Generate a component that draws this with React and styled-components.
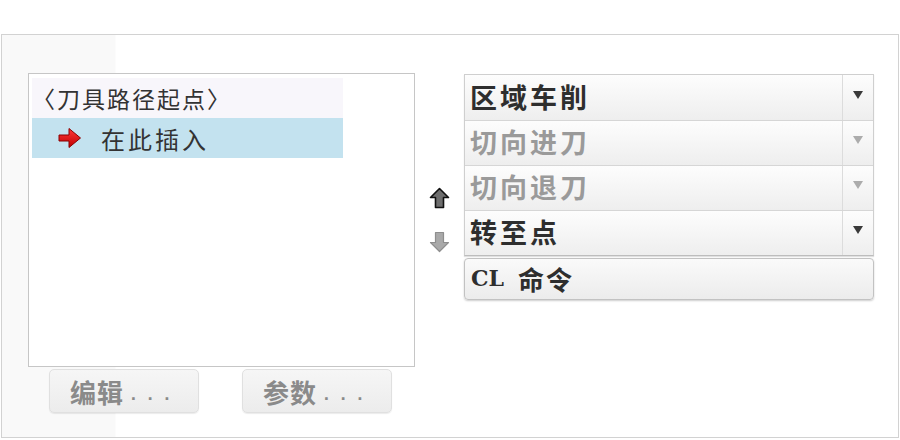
import React from "react";
import styled, { createGlobalStyle } from "styled-components";

const GlobalStyle = createGlobalStyle`
  html, body {
    margin: 0;
    padding: 0;
    background: #ffffff;
  }
  body {
    font-family: "Noto Sans CJK SC", "Noto Sans", sans-serif;
  }
`

const Page = styled.div`
  width: 900px;
  height: 440px;
  padding-top: 34px;
  box-sizing: border-box;
`

const Panel = styled.div`
  display: flex;
  flex-direction: row;
  margin-left: 1px;
  width: 898px;
  height: 404px;
  box-sizing: border-box;
  border: 1px solid #d2d2d2;
  background: linear-gradient(to right, #f9f9f9 0, #f9f9f9 113px, #ffffff 114px);
  padding: 38px 0 0 26px;
`

const LeftColumn = styled.div`
  display: flex;
  flex-direction: column;
  width: 387px;
`

const ListBox = styled.div`
  width: 387px;
  height: 294px;
  box-sizing: border-box;
  border: 1px solid #c6c6c6;
  background: #ffffff;
  padding: 4px 0 0 3px;
`

const ListRow = styled.div`
  display: flex;
  flex-direction: row;
  align-items: center;
  width: 311px;
  height: 40px;
  box-sizing: border-box;
  padding-left: ${(p) => p.$indent}px;
  background: ${(p) => (p.$selected ? "#c3e2ef" : "#f8f6fb")};
  color: #333333;
  font-size: 23px;
  letter-spacing: 2px;
  white-space: nowrap;
`

const RowArrow = styled.svg`
  width: 25px;
  height: 22px;
  margin-right: 19px;
`

const RowLabel = styled.span`
  font-size: 24px;
  letter-spacing: 3px;
`

const ButtonRow = styled.div`
  display: flex;
  flex-direction: row;
  gap: 43px;
  margin: 2px 0 0 21px;
`

const DialogButton = styled.div`
  display: flex;
  align-items: center;
  width: 150px;
  height: 44px;
  box-sizing: border-box;
  padding-left: 20px;
  border: 1px solid #e0e0e0;
  border-radius: 5px;
  background: linear-gradient(#f6f6f6, #ececec);
  box-shadow: 0 1px 1px rgba(0, 0, 0, 0.08);
  color: #8a8a8a;
  font-size: 26px;
  font-weight: bold;
  letter-spacing: 1px;
`

const Dots = styled.span`
  font-family: "Liberation Mono", monospace;
  font-size: 18px;
  letter-spacing: 6px;
  margin-left: 4px;
  padding-top: 8px;
`

const MoveColumn = styled.div`
  display: flex;
  flex-direction: column;
  align-items: center;
  width: 49px;
  padding-top: 114px;
  gap: 22px;
`

const MoveArrow = styled.svg`
  width: 21px;
  height: 22px;
`

const RightColumn = styled.div`
  display: flex;
  flex-direction: column;
  width: 410px;
  padding-top: 1px;
`

const DropGroup = styled.div`
  display: flex;
  flex-direction: column;
  border: 1px solid #cfcfcf;
  border-bottom-color: #bdbdbd;
  box-shadow: 0 1px 1px rgba(0, 0, 0, 0.12);
`

const DropRow = styled.div`
  display: flex;
  flex-direction: row;
  height: 45px;
  box-sizing: border-box;
  border-top: ${(p) => (p.$first ? "none" : "1px solid #d6d6d6")};
  background: linear-gradient(#fdfdfd, #eeeeee);
`

const DropLabel = styled.div`
  flex: 1;
  display: flex;
  align-items: center;
  padding: 0 0 3px 5px;
  font-size: 27px;
  font-weight: bold;
  letter-spacing: 3px;
  color: ${(p) => (p.$disabled ? "#9a9a9a" : "#2e2e2e")};
`

const DropToggle = styled.div`
  display: flex;
  align-items: center;
  justify-content: center;
  width: 30px;
  border-left: 1px solid #dcdcdc;
  padding-bottom: 6px;
`

const Caret = styled.div`
  width: 0;
  height: 0;
  border-left: 5px solid transparent;
  border-right: 5px solid transparent;
  border-top: 8px solid ${(p) => (p.$disabled ? "#acacac" : "#3a3a3a")};
`

const CommandButton = styled.div`
  display: flex;
  align-items: center;
  height: 42px;
  margin-top: 2px;
  box-sizing: border-box;
  padding: 0 0 2px 6px;
  border: 1px solid #c2c2c2;
  border-radius: 4px;
  background: linear-gradient(#fafafa, #ececec);
  box-shadow: 0 1px 2px rgba(0, 0, 0, 0.2);
  color: #2e2e2e;
  font-size: 26px;
  font-weight: bold;
  letter-spacing: 2px;
`

const Latin = styled.span`
  font-family: "DejaVu Serif", "Liberation Serif", serif;
  font-size: 22px;
  margin-right: 14px;
  letter-spacing: 0;
`

const operations = [
  { label: "区域车削", disabled: false },
  { label: "切向进刀", disabled: true },
  { label: "切向退刀", disabled: true },
  { label: "转至点", disabled: false },
]

const InsertArrow = () => (
  <RowArrow viewBox="0 0 25 22">
    <defs>
      <linearGradient id="redArrow" x1="0" y1="0" x2="0" y2="1">
        <stop offset="0" stopColor="#ff3a3a" />
        <stop offset="1" stopColor="#c00000" />
      </linearGradient>
    </defs>
    <path d="M2 8 H12 V1.5 L23.5 11 L12 20.5 V14 H2 Z" fill="url(#redArrow)" stroke="#8a0000" strokeWidth="1" />
  </RowArrow>
)

const UpArrow = () => (
  <MoveArrow viewBox="0 0 21 22">
    <path d="M10.5 1.5 L19.5 10.5 H14.5 V20.5 H6.5 V10.5 H1.5 Z" fill="#6e6e6e" stroke="#111" strokeWidth="1.6" strokeLinejoin="round" />
  </MoveArrow>
)

const DownArrow = () => (
  <MoveArrow viewBox="0 0 21 22">
    <path d="M6.5 1.5 H14.5 V11.5 H19.5 L10.5 20.5 L1.5 11.5 H6.5 Z" fill="#a9a9a9" stroke="#8e8e8e" strokeWidth="1.2" strokeLinejoin="round" />
  </MoveArrow>
)

const App = () => {
  return (
    <Page>
      <GlobalStyle />
      <Panel>
        <LeftColumn>
          <ListBox>
            <ListRow $indent={0}>
              <span>〈刀具路径起点〉</span>
            </ListRow>
            <ListRow $selected $indent={25}>
              <InsertArrow />
              <RowLabel>在此插入</RowLabel>
            </ListRow>
          </ListBox>
          <ButtonRow>
            <DialogButton>
              编辑<Dots>...</Dots>
            </DialogButton>
            <DialogButton>
              参数<Dots>...</Dots>
            </DialogButton>
          </ButtonRow>
        </LeftColumn>

        <MoveColumn>
          <UpArrow />
          <DownArrow />
        </MoveColumn>

        <RightColumn>
          <DropGroup>
            {operations.map((op, i) => (
              <DropRow key={op.label} $first={i === 0}>
                <DropLabel $disabled={op.disabled}>{op.label}</DropLabel>
                <DropToggle>
                  <Caret $disabled={op.disabled} />
                </DropToggle>
              </DropRow>
            ))}
          </DropGroup>
          <CommandButton>
            <Latin>CL</Latin>命令
          </CommandButton>
        </RightColumn>
      </Panel>
    </Page>
  )
}

export default App
